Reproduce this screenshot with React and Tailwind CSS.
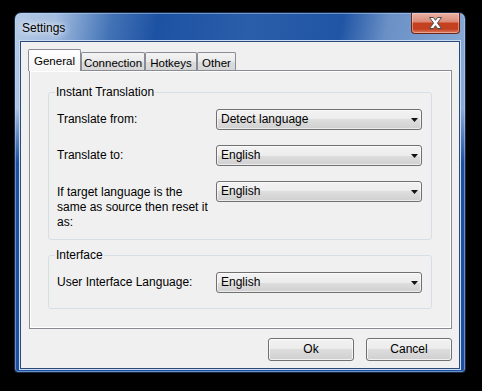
import React from "react";

// Win7-style "Settings" dialog

function ComboBox({ value }) {
  return (
    <div className="flex h-[21px] w-[206px] shrink-0 items-center rounded-[3px] border border-[#707070] bg-[linear-gradient(to_bottom,#f3f3f3_0%,#ececec_50%,#dedede_50%,#d0d0d0_100%)] pl-[4px] pr-[3px] shadow-[inset_0_0_0_1px_rgba(255,255,255,0.6)]">
      <span className="flex-1 text-[12px] leading-[15px] text-black">{value}</span>
      <svg width="7" height="4" viewBox="0 0 7 4">
        <path d="M0 0h7L3.5 4z" fill="#111" />
      </svg>
    </div>
  );
}

function Button({ children }) {
  return (
    <button className="flex h-[23px] w-[86px] items-center justify-center rounded-[3px] border border-[#707070] bg-[linear-gradient(to_bottom,#f2f2f2_0%,#ebebeb_50%,#dddddd_50%,#cfcfcf_100%)] text-[12px] leading-[15px] text-black shadow-[inset_0_0_0_1px_rgba(255,255,255,0.7)]">
      {children}
    </button>
  );
}

function Tab({ label, active, width }) {
  if (active) {
    return (
      <div
        className={`relative z-10 flex h-[22px] ${width} items-start justify-center rounded-t-[2px] border border-b-0 border-[#898c95] bg-[linear-gradient(to_bottom,#ffffff,#f4f4f4)] pt-[4px] text-[11.5px] leading-[14px] text-black`}
      >
        {label}
      </div>
    );
  }
  return (
    <div
      className={`flex h-[19px] ${width} items-start justify-center rounded-t-[2px] border border-b-0 border-[#898c95] bg-[linear-gradient(to_bottom,#f4f4f4_0%,#e9e9e9_50%,#dcdcdc_51%,#d6d6d6_100%)] pt-[3px] text-[11.5px] leading-[14px] text-black`}
    >
      {label}
    </div>
  );
}

function GroupBox({ title, className, children }) {
  return (
    <fieldset
      className={`rounded-[3px] border border-[#d5dfe5] pl-[6px] pr-[8px] ${className}`}
    >
      <legend className="px-[1px] text-[12px] leading-[15px] text-black">{title}</legend>
      {children}
    </fieldset>
  );
}

function Row({ label, value }) {
  return (
    <div className="flex items-center pl-[2px]">
      <span className="w-[159px] shrink-0 text-[12px] leading-[15px] text-black">{label}</span>
      <ComboBox value={value} />
    </div>
  );
}

export default function App() {
  return (
    <div className="h-[391px] w-[482px] overflow-hidden bg-black pl-[14px] pt-[12px] font-['Liberation_Sans',Arial,sans-serif]">
      {/* window frame */}
      <div className="flex h-[361px] w-[452px] flex-col rounded-t-[7px] rounded-b-[4px] border border-[#1b2c48] bg-[image:linear-gradient(to_bottom,transparent_0px,transparent_95px,#1c50a0_150px),linear-gradient(100deg,#b3c9e6_0%,#a3bde0_8%,#4373b6_19%,#1d52a3_28%,#2a5eaa_46%,#2055a5_64%,#6a90c6_73%,#86a7d4_88%,#9ab7de_100%)] shadow-[inset_0_0_0_1px_rgba(200,220,245,0.45)]">
        {/* title bar */}
        <div className="flex h-[28px] shrink-0 items-start justify-between">
          <span className="ml-[7px] mt-[8px] text-[12px] leading-[15px] text-black [text-shadow:0_0_6px_#fff,0_0_10px_rgba(255,255,255,0.8)]">
            Settings
          </span>
          <div className="mr-[5px] flex h-[21px] w-[49px] items-center justify-center rounded-b-[4px] border border-t-0 border-[#6b2519] bg-[linear-gradient(to_bottom,#eab1a4_0%,#dc8a77_45%,#c5401f_50%,#c3401f_80%,#dc7c60_100%)] shadow-[inset_0_0_0_1px_rgba(255,220,210,0.45)]">
            <svg width="15" height="12" viewBox="0 0 15 12">
              <path
                d="M1.5 .5h4l2 2.8 2-2.8h4l-4 5.5 4 5.5h-4l-2-2.8-2 2.8h-4l4-5.5z"
                fill="#fff"
                stroke="#4b4b4b"
                strokeWidth="1"
                strokeLinejoin="round"
              />
            </svg>
          </div>
        </div>

        {/* client area */}
        <div className="mx-[5px] flex h-[328px] shrink-0 flex-col border border-[#2c4a78] bg-[#f0f0f0] px-[7px] pt-[7px] shadow-[0_0_0_1px_#c9dbf1]">
          <div className="-mb-[1px] flex h-[22px] items-end">
            <Tab label="General" active width="w-[53px]" />
            <Tab label="Connection" width="w-[64px]" />
            <Tab label="Hotkeys" width="w-[52px]" />
            <Tab label="Other" width="w-[39px]" />
          </div>

          <div className="ml-[1px] h-[259px] w-[423px] border border-[#898c95] bg-[#f0f0f0] pl-[18px] pt-[14px] shadow-[inset_1px_1px_0_#fff,inset_-1px_-1px_0_#fff]">
            <GroupBox title="Instant Translation" className="w-[384px] pb-[9px] pt-[9px]">
              <div className="flex flex-col gap-[15px]">
                <Row label="Translate from:" value="Detect language" />
                <Row label="Translate to:" value="English" />
                <div className="flex items-start pl-[2px]">
                  <span className="mt-[4px] w-[159px] shrink-0 text-[12px] leading-[15px] text-black">
                    If target language is the
                    <br />
                    same as source then reset it
                    <br />
                    as:
                  </span>
                  <ComboBox value="English" />
                </div>
              </div>
            </GroupBox>

            <GroupBox title="Interface" className="mt-[8px] w-[384px] pb-[15px] pt-[9px]">
              <Row label="User Interface Language:" value="English" />
            </GroupBox>
          </div>

          <div className="mt-[9px] flex justify-end gap-[12px]">
            <Button>Ok</Button>
            <Button>Cancel</Button>
          </div>
        </div>
      </div>
    </div>
  );
}
